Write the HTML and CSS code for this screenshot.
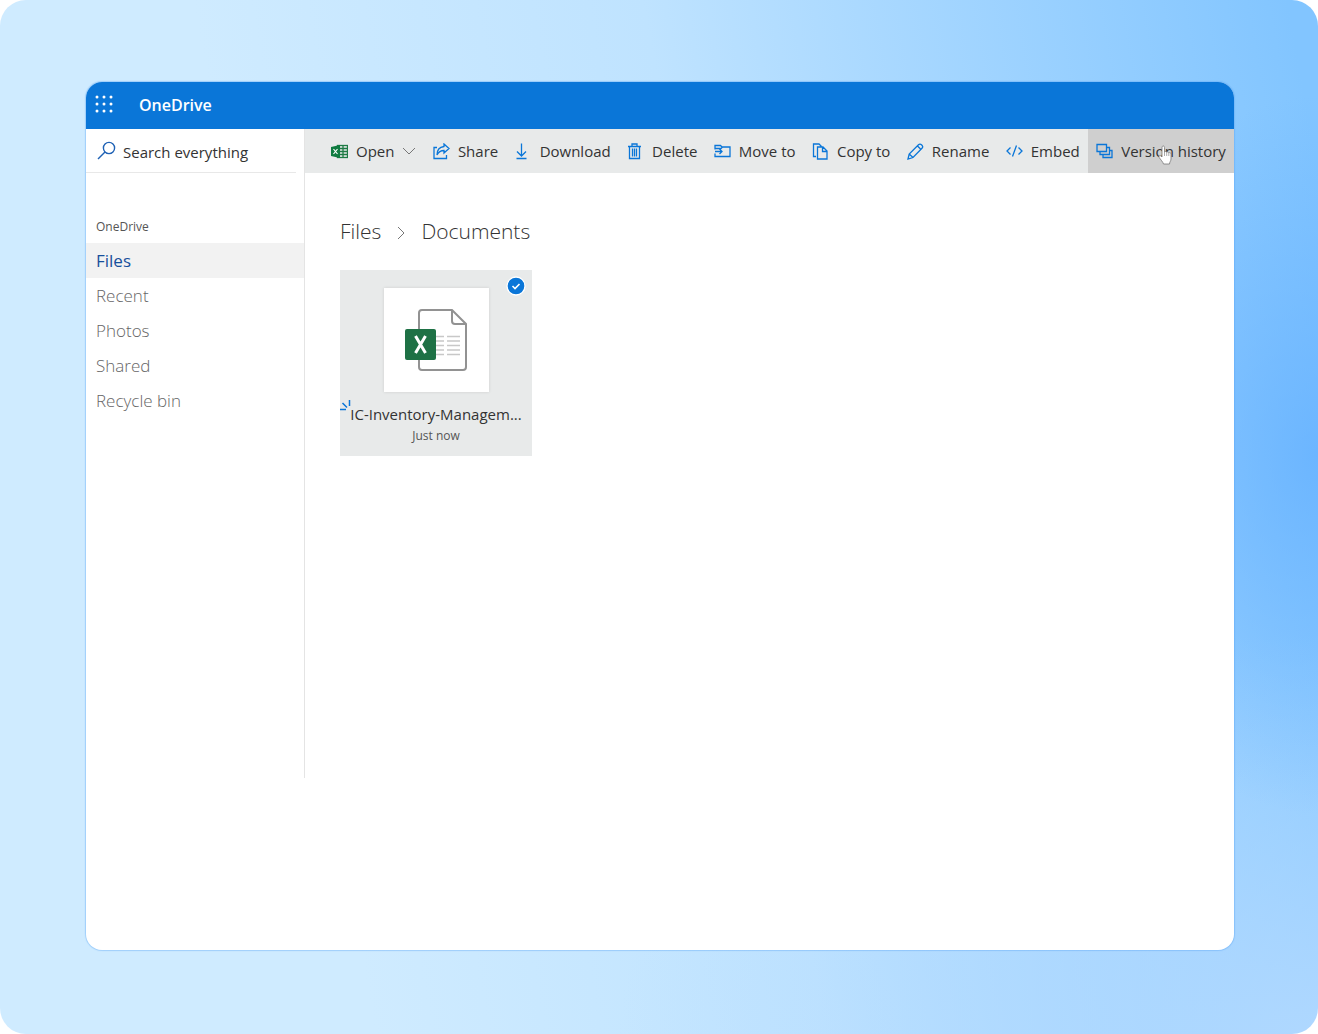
FILE: index.html
```html
<!DOCTYPE html>
<html lang="en">

<head>
  <meta charset="UTF-8">
  <meta name="viewport" content="width=device-width, initial-scale=1.0">
  <title>OneDrive</title>
  <link rel="stylesheet" href="styles.css">
</head>

<body>

  <div class="backdrop">
    <div class="window">

      <header class="topbar">
        <button class="launcher" aria-label="App launcher">
          <svg width="18" height="18" viewBox="0 0 18 18" fill="#fff">
            <circle cx="2" cy="2" r="1.5" /><circle cx="9" cy="2" r="1.5" /><circle cx="16" cy="2" r="1.5" />
            <circle cx="2" cy="9" r="1.5" /><circle cx="9" cy="9" r="1.5" /><circle cx="16" cy="9" r="1.5" />
            <circle cx="2" cy="16" r="1.5" /><circle cx="9" cy="16" r="1.5" /><circle cx="16" cy="16" r="1.5" />
          </svg>
        </button>
        <a class="brand" href="#">OneDrive</a>
      </header>

      <div class="content">
        <aside class="sidebar">
          <label class="search">
            <svg class="search-icon" width="19" height="19" viewBox="0 0 19 19" fill="none" stroke="#1f62b5" stroke-width="1.4">
              <circle cx="12" cy="7" r="5.6" />
              <path d="M8 11L1 18" />
            </svg>
            <input type="text" placeholder="Search everything" aria-label="Search everything">
          </label>

          <h2 class="nav-title">OneDrive</h2>
          <nav class="nav">
            <a class="nav-link active" href="#">Files</a>
            <a class="nav-link" href="#">Recent</a>
            <a class="nav-link" href="#">Photos</a>
            <a class="nav-link" href="#">Shared</a>
            <a class="nav-link" href="#">Recycle bin</a>
          </nav>
        </aside>

        <main class="main">
          <div class="toolbar">
            <button class="tool">
              <svg class="icon" viewBox="0 0 17 17">
                <rect x="6.5" y="2.5" width="10" height="12" fill="#e8eaea" stroke="#1e7b45" />
                <path d="M6 5.500h11M6 8.500h11M6 11.500h11M12 2.500v12" stroke="#1e7b45" />
                <path d="M0 4L9 2V15L0 13z" fill="#107c41" stroke="none" />
                <path d="M2.500 6L6.500 11M6.500 6L2.500 11" stroke="#fff" stroke-width="1.200" />
              </svg>
              Open
              <svg class="chevron" viewBox="0 0 14 8" fill="none" stroke="#777"><path d="M1 1l6 6 6-6" /></svg>
            </button>
            <button class="tool">
              <svg class="icon" viewBox="0 0 17 17">
                <path d="M4 4.500H1v11h12.500V12" />
                <path d="M11 1l5 4.500-5 4.500V7.500C7.500 7.500 5.500 9 4 12c0-5 2.500-8 7-8.500z" />
              </svg>
              Share
            </button>
            <button class="tool">
              <svg class="icon" viewBox="0 0 17 17"><path d="M6.500 .5v12.500M2 8.500L6.500 13l4.500-4.500M1.500 15.500h10" /></svg>
              Download
            </button>
            <button class="tool">
              <svg class="icon" viewBox="0 0 17 17"><path d="M1 3.500h13M5 3.500V1h5v2.500M2.500 3.500v12h10v-12M5.500 5.500v8M7.500 5.500v8M9.500 5.500v8" /></svg>
              Delete
            </button>
            <button class="tool">
              <svg class="icon" viewBox="0 0 17 17"><path d="M1 6.500v-4h5.500l1.500 1.500h8v9.500H1v-3M1 5.500h6l1.500-1.500M1 8.500h7M5.500 6L8 8.500 5.500 11" /></svg>
              Move to
            </button>
            <button class="tool">
              <svg class="icon" viewBox="0 0 17 17"><path d="M4 13.500H1.500V1h5.500l2.500 2.500M5.500 4h5.500l4 4v8H5.500zM10.500 4v4.500H15" /></svg>
              Copy to
            </button>
            <button class="tool">
              <svg class="icon" viewBox="0 0 17 17"><path d="M1 16l1.200-5L11.500 1.800c2-2 5.500 1.500 3.500 3.500L6 14.500zM2.200 11L6 14.500M10.500 3l3.500 3.500" /></svg>
              Rename
            </button>
            <button class="tool">
              <svg class="icon" viewBox="0 0 17 17"><path d="M4.500 4.500L1 8l3.500 3.500M12.500 4.500L16 8l-3.500 3.500M10.500 2.500l-4 11" /></svg>
              Embed
            </button>
            <button class="tool hovered">
              <svg class="icon" viewBox="0 0 17 17"><path d="M1 1.500h9.500v7H1zM4 8.500v3h9.500v-7h-3M7 11.500v3h9v-7h-2.500" /></svg>
              Version history
              <svg class="cursor" viewBox="0 0 14 20">
                <path d="M4 12V2.500c0-2 2.500-2 2.500 0V7c.6-.9 1.900-.7 2.200.3.600-.7 1.800-.5 2.100.5.800-.5 2.200-.2 2.200 1.200v5c0 2-1.500 3-1.500 5H5.500C5 17 2.500 14.500 1.200 12.500.5 11 1.800 10 3 11z" fill="#fff" stroke="#777" stroke-width=".8" />
                <path d="M6.500 7v4M8.700 7.500V11M10.800 8v3" stroke="#888" stroke-width=".7" />
              </svg>
            </button>
          </div>

          <nav class="breadcrumb">
            <a href="#">Files</a>
            <svg class="separator" viewBox="0 0 8 14" fill="none" stroke="#777"><path d="M1 1l6 6-6 6" /></svg>
            <a href="#">Documents</a>
          </nav>

          <div class="files">
            <a class="file" href="#">
              <svg class="check" viewBox="0 0 20 20">
                <circle cx="10" cy="10" r="9" fill="#0a76d8" stroke="#fff" stroke-width="1.300" />
                <path d="M6.500 10l2.500 2.500 4.500-4.500" fill="none" stroke="#fff" stroke-width="1.600" />
              </svg>
              <span class="thumb">
                <svg width="62" height="62" viewBox="0 0 62 62">
                  <path d="M17 1h30l14 14v43q0 3-3 3H17q-3 0-3-3V4q0-3 3-3z" fill="#fff" stroke="#929292" stroke-width="2" />
                  <path d="M47 1v11q0 3 3 3h11" fill="none" stroke="#929292" stroke-width="2" />
                  <path d="M30 27.500h9M42 27.500h13M30 32h9M42 32h13M30 36.500h9M42 36.500h13M30 41h9M42 41h13M30 45.500h9M42 45.500h13" stroke="#c8c8c8" stroke-width="1.500" />
                  <rect x="0" y="20" width="31" height="31" rx="2" fill="#1e7145" />
                  <path d="M10.500 27L20.500 44M20.500 27L10.500 44" stroke="#fff" stroke-width="3" />
                </svg>
              </span>
              <svg class="new-mark" viewBox="0 0 12 12"><path d="M0 9.500h6M2.500 3l4.500 4.500M9.500 0v6" stroke="#0a76d8" stroke-width="1.500" /></svg>
              <span class="file-name">IC-Inventory-Managem...</span>
              <span class="file-date">Just now</span>
            </a>
          </div>
        </main>
      </div>

    </div>
  </div>

</body>

</html>
```
FILE: styles.css
```css
* {
  box-sizing: border-box;
}

body {
  margin: 0;
  background: #fff;
  font-family: "Open Sans", "Segoe UI", sans-serif;
  color: #333;
}

a {
  color: inherit;
  text-decoration: none;
}

button {
  font-family: inherit;
  border: none;
  background: none;
  padding: 0;
  cursor: pointer;
}

.backdrop {
  display: flex;
  min-height: 100vh;
  padding: 82px 84px 84px 86px;
  border-radius: 26px;
  background:
    radial-gradient(ellipse 240px 360px at 100% 44%, rgba(96, 174, 255, 0.7), rgba(96, 174, 255, 0)),
    radial-gradient(ellipse 700px 400px at 100% 100%, rgba(178, 217, 255, 0.9), rgba(178, 217, 255, 0)),
    linear-gradient(80deg, #cfebff 0%, #cfebff 25%, #bfe3ff 55%, #82c5ff 98%);
}

.window {
  flex: 1;
  min-width: 0;
  background: #fff;
  border-radius: 16px;
  box-shadow: 0 0 1px 1px rgba(90, 165, 245, 0.4);
  overflow: hidden;
}

.topbar {
  display: flex;
  align-items: center;
  gap: 26px;
  height: 47px;
  padding: 0 9px 4px;
  background: #0a76d8;
}

.launcher {
  display: flex;
}

.brand {
  color: #fff;
  font-size: 16px;
  font-weight: 600;
  padding-top: 2px;
}

.content {
  display: flex;
  align-items: flex-start;
}

.sidebar {
  flex: 0 0 219px;
  min-height: 649px;
  border-right: 1px solid #e4e4e4;
}

.search {
  display: flex;
  align-items: center;
  gap: 7px;
  height: 44px;
  margin-right: 8px;
  padding-left: 11px;
  border-bottom: 1px solid #e8e8e8;
}

.search-icon {
  flex: none;
}

.search input {
  width: 100%;
  min-width: 0;
  padding: 2px 0 0;
  border: none;
  outline: none;
  background: none;
  font-family: inherit;
  font-size: 15px;
}

.search input::placeholder {
  color: #333;
  opacity: 1;
}

.nav-title {
  margin: 44px 0 7px 10px;
  font-size: 12px;
  line-height: 19px;
  font-weight: 400;
  color: #555;
}

.nav-link {
  display: block;
  padding-left: 10px;
  font-size: 17px;
  line-height: 35px;
  font-weight: 300;
  color: #666;
}

.nav-link.active {
  background: #f2f2f2;
  color: #174f9c;
  font-weight: 400;
}

.main {
  flex: 1;
  min-width: 0;
}

.toolbar {
  display: flex;
  justify-content: space-between;
  height: 44px;
  padding-left: 18px;
  background: #e8eaea;
}

.tool {
  display: flex;
  align-items: center;
  gap: 8px;
  padding: 0 8px;
  font-size: 15px;
  color: #333;
  white-space: nowrap;
}

.icon {
  flex: none;
  width: 17px;
  height: 17px;
  fill: none;
  stroke: #0a76d8;
  stroke-width: 1.3;
}

.chevron {
  width: 14px;
  height: 8px;
}

.tool.hovered {
  position: relative;
  background: #cfcfcf;
}

.cursor {
  position: absolute;
  left: 70px;
  top: 16px;
  width: 14px;
  height: 20px;
}

.breadcrumb {
  display: flex;
  align-items: center;
  gap: 16px;
  padding: 42px 35px 0;
  font-size: 21px;
  line-height: 32px;
  font-weight: 300;
}

.separator {
  width: 8px;
  height: 14px;
  margin-top: 3px;
}

.files {
  display: flex;
  padding: 23px 35px;
}

.file {
  position: relative;
  display: flex;
  flex-direction: column;
  align-items: center;
  width: 192px;
  height: 186px;
  padding-top: 18px;
  background: #e8eaea;
}

.check {
  position: absolute;
  right: 6px;
  top: 6px;
  width: 20px;
  height: 20px;
}

.thumb {
  display: flex;
  align-items: center;
  justify-content: center;
  width: 105px;
  height: 104px;
  background: #fff;
  box-shadow: 0 0 3px rgba(0, 0, 0, 0.12);
}

.new-mark {
  position: absolute;
  left: 0;
  top: 130px;
  width: 12px;
  height: 12px;
}

.file-name {
  margin-top: 11px;
  font-size: 15px;
  line-height: 22px;
}

.file-date {
  font-size: 12px;
  line-height: 22px;
  color: #555;
}
```
